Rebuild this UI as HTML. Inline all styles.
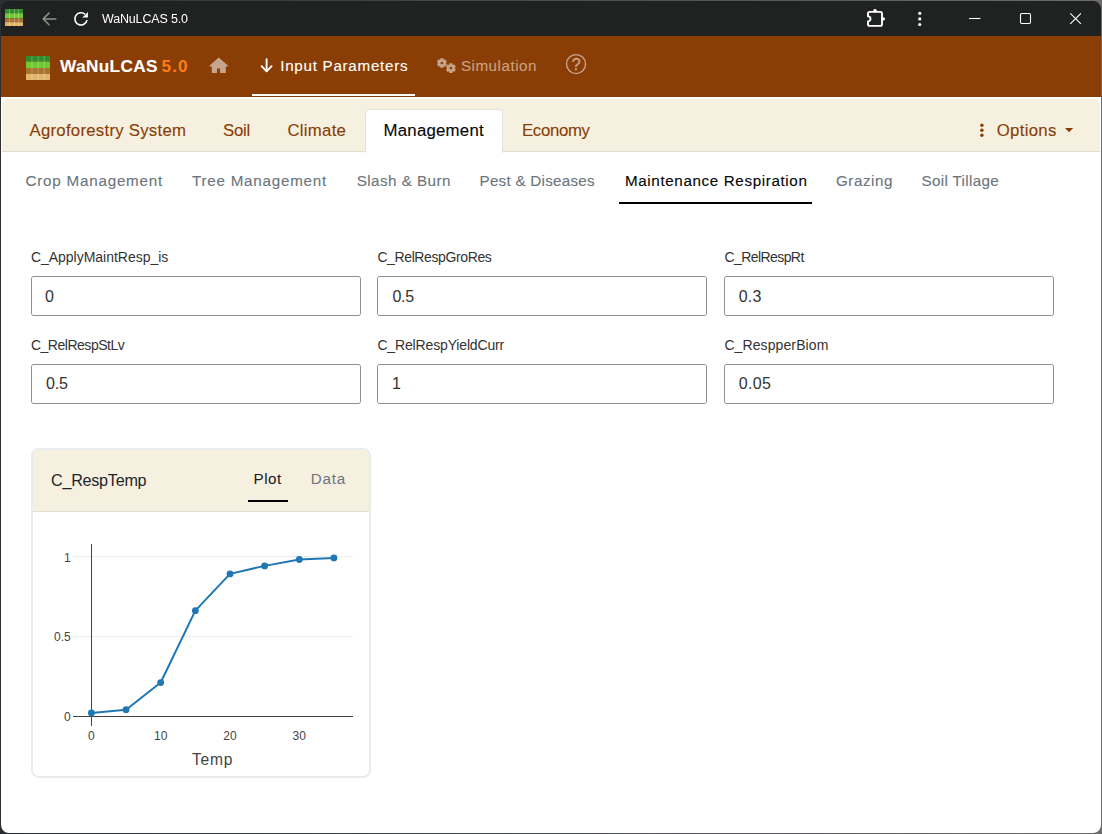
<!DOCTYPE html>
<html lang="en">
<head>
<meta charset="utf-8">
<title>WaNuLCAS 5.0</title>
<style>
html,body{margin:0;padding:0;}
body{width:1102px;height:834px;overflow:hidden;background:#fff;font-family:"Liberation Sans",sans-serif;}
#win{position:absolute;left:0;top:0;width:1102px;height:834px;overflow:hidden;background:#fff;}
#win div,#win span,#win svg{position:absolute;}
.t{white-space:nowrap;-webkit-text-stroke:0.12px currentColor;}
.t[id^="l"],.t[id^="v"],.t[id^="c"]{-webkit-text-stroke:0;}
#tt{will-change:transform;-webkit-text-stroke:0;}
#q{-webkit-text-stroke:0.35px currentColor;}
#titlebar{left:0;top:0;width:1102px;height:36px;background:#202221;}
#header{left:0;top:36px;width:1102px;height:61px;background:#8a3d04;}
#navline{left:252px;top:94px;width:162.5px;height:2px;background:#fff;}
#tabbar{left:2px;top:99px;width:1098px;height:52px;background:#f6f0e0;border-bottom:1px solid #deddd0;border-radius:6px 6px 0 0;}
#acttab{left:364.5px;top:108.5px;width:136px;height:43.5px;background:#fff;border:1px solid #e3e1d8;border-bottom:none;border-radius:5px 5px 0 0;}
#subline{left:619px;top:202px;width:193px;height:2px;background:#000;}
.inp{width:328px;height:38px;border:1px solid #8a9199;border-radius:2.5px;background:#fff;}
#card{left:31px;top:448px;width:336px;height:326px;border:2px solid #e9ecef;border-radius:8px;background:#fff;overflow:hidden;}
#cardhead{left:0;top:0;width:336px;height:61px;background:#f6f0e0;border-bottom:1px solid #e0dfd2;}
#plotline{left:248px;top:500px;width:40px;height:2px;background:#000;}
</style>
</head>
<body>
<div id="win">
<div id="titlebar"></div>
<div id="header"></div>
<div id="navline"></div>
<div id="tabbar"></div>
<div id="acttab"></div>
<div id="subline"></div>
<div class="inp" style="left:31px;top:276px"></div>
<div class="inp" style="left:377.3px;top:276px"></div>
<div class="inp" style="left:723.7px;top:276px"></div>
<div class="inp" style="left:31px;top:364px"></div>
<div class="inp" style="left:377.3px;top:364px"></div>
<div class="inp" style="left:723.7px;top:364px"></div>
<div id="card"><div id="cardhead"></div></div>
<div id="plotline"></div>
<!-- title bar app icon -->
<svg style="left:5px;top:8.6px" width="18.4" height="17.6" viewBox="0 0 18.4 17.6">
 <rect x="0" y="0" width="18.4" height="4.2" fill="#2f8c2a"/>
 <rect x="0" y="4.2" width="18.4" height="5.1" fill="#70c832"/>
 <rect x="0" y="9.3" width="18.4" height="3.9" fill="#a8722f"/>
 <rect x="0" y="13.2" width="18.4" height="4.4" fill="#e3b56c"/>
 <g stroke="#fff" stroke-opacity=".38" stroke-width=".8"><path d="M4.6 0V17.6M9.4 0V17.6M13.6 0V17.6"/></g>
</svg>
<!-- back arrow -->
<svg style="left:40px;top:10px" width="20" height="18" viewBox="40 10 20 18" fill="none" stroke="#8e908f" stroke-width="1.5" stroke-linecap="round" stroke-linejoin="round">
 <path d="M55.8 18.9H43.2M49 13.1L43.2 18.9L49 24.7"/>
</svg>
<!-- reload -->
<svg style="left:70px;top:8px" width="24" height="22" viewBox="70 8 24 22" fill="none" stroke="#ffffff" stroke-width="1.6">
 <path d="M85.12 14.30A6.15 6.15 0 1 0 87.02 20.15"/>
 <path d="M87.9 12.1V17.6H82.1L84.6 15.6Z" fill="#ffffff" stroke="none"/>
</svg>
<!-- extension puzzle -->
<svg style="left:862px;top:6px" width="28" height="24" viewBox="862 6 28 24" fill="none" stroke="#ffffff" stroke-width="1.9" stroke-linejoin="round">
 <path d="M869.6 11.9H880.4Q882 11.9 882 13.5V24.3Q882 25.9 880.4 25.9H869.6Q868 25.9 868 24.3V21.4A2.5 2.5 0 0 0 868 16.4V13.5Q868 11.9 869.6 11.9Z"/>
 <circle cx="875" cy="10.7" r="1.8" fill="#ffffff" stroke="none"/>
 <circle cx="883.3" cy="18.9" r="1.7" fill="#ffffff" stroke="none"/>
</svg>
<!-- kebab -->
<svg style="left:915px;top:9px" width="10" height="20" viewBox="915 9 10 20" fill="#ffffff">
 <circle cx="919.75" cy="13.3" r="1.6"/><circle cx="919.75" cy="18.9" r="1.6"/><circle cx="919.75" cy="24.5" r="1.6"/>
</svg>
<!-- window controls -->
<svg style="left:960px;top:8px" width="130" height="22" viewBox="960 8 130 22" fill="none" stroke="#ffffff" stroke-width="1.1">
 <path d="M969 18.5H980.5"/>
 <rect x="1020.5" y="13.5" width="10" height="10" rx="1.2"/>
 <path d="M1070.3 13.3L1080.9 23.9M1080.9 13.3L1070.3 23.9"/>
</svg>
<!-- header logo -->
<svg style="left:26px;top:56px" width="24.3" height="24" viewBox="0 0 24.3 24">
 <rect x="0" y="0" width="24.3" height="5.6" fill="#2f8c2a"/>
 <rect x="0" y="5.6" width="24.3" height="6.4" fill="#70c832"/>
 <rect x="0" y="12" width="24.3" height="6" fill="#a8722f"/>
 <rect x="0" y="18" width="24.3" height="6" fill="#e3b56c"/>
 <g stroke="#fff" stroke-opacity=".3" stroke-width=".9"><path d="M6 0V24M12.2 0V24M18.2 0V24"/></g>
</svg>
<!-- home -->
<svg style="left:208px;top:55px" width="22" height="20" viewBox="208 55 22 20" fill="#c7a58c">
 <path d="M218.7 57.4L227.9 65.6Q228 66.6 227 66.6H225.8V72.9H220.1V68.4H217.0V72.9H211.8V66.6H210.4Q209.4 66.6 209.6 65.6Z"/>
</svg>
<!-- arrow down -->
<svg style="left:258px;top:56px" width="18" height="20" viewBox="258 56 18 20" fill="none" stroke="#ffffff" stroke-width="1.9" stroke-linecap="round" stroke-linejoin="round">
 <path d="M266.6 59.2V71.2M261.6 66.2L266.6 71.4L271.6 66.2"/>
</svg>
<!-- gears -->
<svg style="left:434px;top:55px" width="26" height="22" viewBox="434 55 26 22">
 <g fill="#c7a58c" fill-rule="evenodd">
  <path id="g1" d="M440.24 59.47L440.32 58.15L443.48 58.15L443.56 59.47L444.13 59.80L445.31 59.21L446.89 61.94L445.79 62.67L445.79 63.33L446.89 64.06L445.31 66.79L444.13 66.20L443.56 66.53L443.48 67.85L440.32 67.85L440.24 66.53L439.67 66.20L438.49 66.79L436.91 64.06L438.01 63.33L438.01 62.67L436.91 61.94L438.49 59.21L439.67 59.80ZM440.60 63.00a1.3 1.3 0 1 0 2.6 0a1.3 1.3 0 1 0 -2.6 0Z"/>
  <path id="g2" d="M449.24 64.57L449.32 63.25L452.48 63.25L452.56 64.57L453.13 64.90L454.31 64.31L455.89 67.04L454.79 67.77L454.79 68.43L455.89 69.16L454.31 71.89L453.13 71.30L452.56 71.63L452.48 72.95L449.32 72.95L449.24 71.63L448.67 71.30L447.49 71.89L445.91 69.16L447.01 68.43L447.01 67.77L445.91 67.04L447.49 64.31L448.67 64.90ZM449.60 68.10a1.3 1.3 0 1 0 2.6 0a1.3 1.3 0 1 0 -2.6 0Z"/>
 </g>
</svg>
<!-- help -->
<svg style="left:563px;top:51px" width="26" height="26" viewBox="563 51 26 26" fill="none" stroke="#c7a58c" stroke-width="1.35">
 <circle cx="576.05" cy="64.05" r="9.5"/>
</svg>
<!-- options dots + caret -->
<svg style="left:976px;top:120px" width="12" height="20" viewBox="976 120 12 20" fill="#8a3d04">
 <circle cx="981.9" cy="125.2" r="1.7"/><circle cx="981.9" cy="130.2" r="1.7"/><circle cx="981.9" cy="135.2" r="1.7"/>
</svg>
<svg style="left:1062px;top:125px" width="14" height="10" viewBox="1062 125 14 10" fill="#8a3d04">
 <path d="M1065 128H1073.2L1069.1 132.3Z"/>
</svg>

<svg style="left:33px;top:512px" width="336" height="264" viewBox="33 512 336 264" font-family="Liberation Sans, sans-serif">
 <g stroke="#ececec" stroke-width="1" shape-rendering="crispEdges"><path d="M73 556.5H353M73 636.5H353"/></g>
 <g stroke="#444444" stroke-width="1" shape-rendering="crispEdges"><path d="M73 716.5H353M91.5 544V726"/></g>
 <polyline points="91.40,712.90 126.05,709.71 160.70,682.54 195.35,610.63 230.00,573.88 264.65,565.89 299.30,559.50 333.95,557.90" fill="none" stroke="#1f77b4" stroke-width="2" stroke-linejoin="round"/>
 <g fill="#1f77b4"><circle cx="91.40" cy="712.90" r="3.4"/><circle cx="126.05" cy="709.71" r="3.4"/><circle cx="160.70" cy="682.54" r="3.4"/><circle cx="195.35" cy="610.63" r="3.4"/><circle cx="230.00" cy="573.88" r="3.4"/><circle cx="264.65" cy="565.89" r="3.4"/><circle cx="299.30" cy="559.50" r="3.4"/><circle cx="333.95" cy="557.90" r="3.4"/></g>
 <g font-size="12" fill="#444444" text-anchor="end">
  <text x="70.6" y="561.5">1</text><text x="70.8" y="640.8">0.5</text><text x="70.8" y="720.6">0</text>
 </g>
 <g font-size="12" fill="#444444" text-anchor="middle">
  <text x="91.4" y="740">0</text><text x="160.7" y="740">10</text><text x="230" y="740">20</text><text x="299.3" y="740">30</text>
 </g>
 <text x="212.5" y="764.7" font-size="15.6" fill="#444444" text-anchor="middle" letter-spacing="0.75">Temp</text>
</svg>
<span class="t" id="tt" style="left:102.00px;top:12.00px;font-size:12.5px;line-height:14px;color:#ffffff;font-weight:400;letter-spacing:-0.165px">WaNuLCAS 5.0</span>
<span class="t" id="brand" style="left:60.00px;top:56.00px;font-size:17.2px;line-height:20px;color:#ffffff;font-weight:700;letter-spacing:0.375px">WaNuLCAS</span>
<span class="t" id="ver" style="left:161.60px;top:56.00px;font-size:17.2px;line-height:20px;color:#fd7e14;font-weight:700;letter-spacing:1.033px">5.0</span>
<span class="t" id="inp" style="left:280.20px;top:57.00px;font-size:15.2px;line-height:17px;color:#ffffff;font-weight:400;letter-spacing:0.727px">Input Parameters</span>
<span class="t" id="sim" style="left:460.90px;top:57.00px;font-size:15.2px;line-height:17px;color:#c9a283;font-weight:400;letter-spacing:0.515px">Simulation</span>
<span class="t" id="q" style="left:571.80px;top:56.00px;font-size:16px;line-height:17px;color:#c7a58c;font-weight:400;letter-spacing:0.000px">?</span>
<span class="t" id="t1" style="left:29.50px;top:121.00px;font-size:16.8px;line-height:19px;color:#8a3d04;font-weight:400;letter-spacing:0.248px">Agroforestry System</span>
<span class="t" id="t2" style="left:223.00px;top:121.00px;font-size:16.8px;line-height:19px;color:#8a3d04;font-weight:400;letter-spacing:-0.251px">Soil</span>
<span class="t" id="t3" style="left:287.40px;top:121.00px;font-size:16.8px;line-height:19px;color:#8a3d04;font-weight:400;letter-spacing:0.275px">Climate</span>
<span class="t" id="t4" style="left:383.50px;top:121.00px;font-size:16.8px;line-height:19px;color:#050505;font-weight:400;letter-spacing:0.246px">Management</span>
<span class="t" id="t5" style="left:522.00px;top:121.00px;font-size:16.8px;line-height:19px;color:#8a3d04;font-weight:400;letter-spacing:-0.327px">Economy</span>
<span class="t" id="opt" style="left:996.70px;top:121.00px;font-size:16.8px;line-height:19px;color:#8a3d04;font-weight:400;letter-spacing:0.310px">Options</span>
<span class="t" id="s1" style="left:25.50px;top:172.00px;font-size:15.2px;line-height:17px;color:#6c757d;font-weight:400;letter-spacing:0.781px">Crop Management</span>
<span class="t" id="s2" style="left:192.00px;top:172.00px;font-size:15.2px;line-height:17px;color:#6c757d;font-weight:400;letter-spacing:0.763px">Tree Management</span>
<span class="t" id="s3" style="left:356.70px;top:172.00px;font-size:15.2px;line-height:17px;color:#6c757d;font-weight:400;letter-spacing:0.464px">Slash &amp; Burn</span>
<span class="t" id="s4" style="left:479.50px;top:172.00px;font-size:15.2px;line-height:17px;color:#6c757d;font-weight:400;letter-spacing:0.262px">Pest &amp; Diseases</span>
<span class="t" id="s5" style="left:625.00px;top:172.00px;font-size:15.2px;line-height:17px;color:#050505;font-weight:400;letter-spacing:0.629px">Maintenance Respiration</span>
<span class="t" id="s6" style="left:836.00px;top:172.00px;font-size:15.2px;line-height:17px;color:#6c757d;font-weight:400;letter-spacing:0.545px">Grazing</span>
<span class="t" id="s7" style="left:921.60px;top:172.00px;font-size:15.2px;line-height:17px;color:#6c757d;font-weight:400;letter-spacing:0.339px">Soil Tillage</span>
<span class="t" id="l1" style="left:30.90px;top:249.00px;font-size:14px;line-height:16px;color:#333333;font-weight:400;letter-spacing:-0.018px">C_ApplyMaintResp_is</span>
<span class="t" id="l2" style="left:377.40px;top:249.00px;font-size:14px;line-height:16px;color:#333333;font-weight:400;letter-spacing:-0.387px">C_RelRespGroRes</span>
<span class="t" id="l3" style="left:724.40px;top:249.00px;font-size:14px;line-height:16px;color:#333333;font-weight:400;letter-spacing:-0.570px">C_RelRespRt</span>
<span class="t" id="l4" style="left:30.90px;top:337.00px;font-size:14px;line-height:16px;color:#333333;font-weight:400;letter-spacing:-0.475px">C_RelRespStLv</span>
<span class="t" id="l5" style="left:377.40px;top:337.00px;font-size:14px;line-height:16px;color:#333333;font-weight:400;letter-spacing:-0.150px">C_RelRespYieldCurr</span>
<span class="t" id="l6" style="left:724.40px;top:337.00px;font-size:14px;line-height:16px;color:#333333;font-weight:400;letter-spacing:0.104px">C_RespperBiom</span>
<span class="t" id="v1" style="left:45.00px;top:288.00px;font-size:16px;line-height:17px;color:#333333;font-weight:400;letter-spacing:0.000px">0</span>
<span class="t" id="v2" style="left:392.40px;top:288.00px;font-size:16px;line-height:17px;color:#333333;font-weight:400;letter-spacing:-0.222px">0.5</span>
<span class="t" id="v3" style="left:738.80px;top:288.00px;font-size:16px;line-height:17px;color:#333333;font-weight:400;letter-spacing:0.178px">0.3</span>
<span class="t" id="v4" style="left:46.00px;top:375.00px;font-size:16px;line-height:17px;color:#333333;font-weight:400;letter-spacing:-0.172px">0.5</span>
<span class="t" id="v5" style="left:392.00px;top:375.00px;font-size:16px;line-height:17px;color:#333333;font-weight:400;letter-spacing:0.000px">1</span>
<span class="t" id="v6" style="left:738.80px;top:375.00px;font-size:16px;line-height:17px;color:#333333;font-weight:400;letter-spacing:0.319px">0.05</span>
<span class="t" id="ct" style="left:51.00px;top:471.00px;font-size:16.2px;line-height:18px;color:#212529;font-weight:400;letter-spacing:-0.273px">C_RespTemp</span>
<span class="t" id="cp" style="left:253.60px;top:470.00px;font-size:15.2px;line-height:17px;color:#1a1a1a;font-weight:400;letter-spacing:0.450px">Plot</span>
<span class="t" id="cd" style="left:310.80px;top:470.00px;font-size:15.2px;line-height:17px;color:#6c757d;font-weight:400;letter-spacing:0.789px">Data</span>
<svg style="left:0;top:0" width="1102" height="834" viewBox="0 0 1102 834">
 <defs><linearGradient id="fg" x1="0" x2="1" y1="0" y2="0"><stop offset="0" stop-color="#2c2e34"/><stop offset="1" stop-color="#6b6b6b"/></linearGradient></defs>
 <path fill-rule="evenodd" fill="url(#fg)" d="M0 0H1102V834H0ZM9 1H1093A8 8 0 0 1 1101 9V825A8 8 0 0 1 1093 833H9A8 8 0 0 1 1 825V9A8 8 0 0 1 9 1Z"/>
</svg>
</div>
</body>
</html>
